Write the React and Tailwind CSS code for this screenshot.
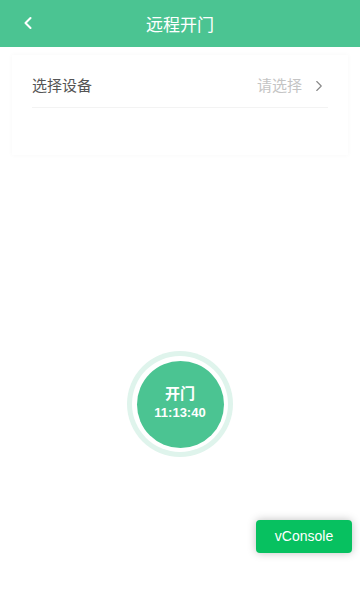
import { ChevronLeft, ChevronRight } from "lucide-react";

const FONT = { fontFamily: '"Microsoft YaHei", "Noto Sans CJK SC", "Liberation Sans", sans-serif' };

export default function App() {
  return (
    <div className="relative h-[600px] w-[360px] overflow-hidden bg-white" style={FONT}>
      <header className="relative flex h-[47px] items-center justify-center bg-[#4bc492]">
        <button className="absolute left-[18px] top-[13px] text-white">
          <ChevronLeft size={20} strokeWidth={2.5} />
        </button>
        <h1 className="text-[17px] text-white">远程开门</h1>
      </header>

      <div className="mx-[12px] mt-[8px] h-[100px] bg-white px-[20px] shadow-[0_0_5px_rgba(0,0,0,0.035)]">
        <div className="flex h-[53px] items-center justify-between border-b border-[#f3f3f3] pt-[9px]">
          <span className="text-[15px] text-[#555]">选择设备</span>
          <span className="flex items-center gap-[8px] text-[15px] text-[#c4c4c4]">
            请选择
            <ChevronRight size={18} className="text-[#888]" strokeWidth={1.5} />
          </span>
        </div>
      </div>

      <div className="mt-[196px] flex justify-center">
        <div className="flex h-[106px] w-[106px] items-center justify-center rounded-full bg-[#dff4ec]">
          <div className="flex h-[96px] w-[96px] items-center justify-center rounded-full bg-white">
            <div className="flex h-[87px] w-[87px] flex-col items-center justify-center rounded-full bg-[#4bc492] pb-[4px] text-white">
              <span className="text-[15px] font-bold leading-[22px]">开门</span>
              <span className="text-[13px] font-bold leading-[18px]" style={{ fontFamily: '"Liberation Sans", sans-serif' }}>11:13:40</span>
            </div>
          </div>
        </div>
      </div>

      <div
        className="absolute left-[256px] top-[520px] flex h-[33px] w-[96px] items-center justify-center rounded-[4px] bg-[#07c160] text-[14px] text-white shadow-[0_0_8px_rgba(0,0,0,0.25)]"
        style={{ fontFamily: '"Liberation Sans", sans-serif' }}
      >
        vConsole
      </div>
    </div>
  );
}
